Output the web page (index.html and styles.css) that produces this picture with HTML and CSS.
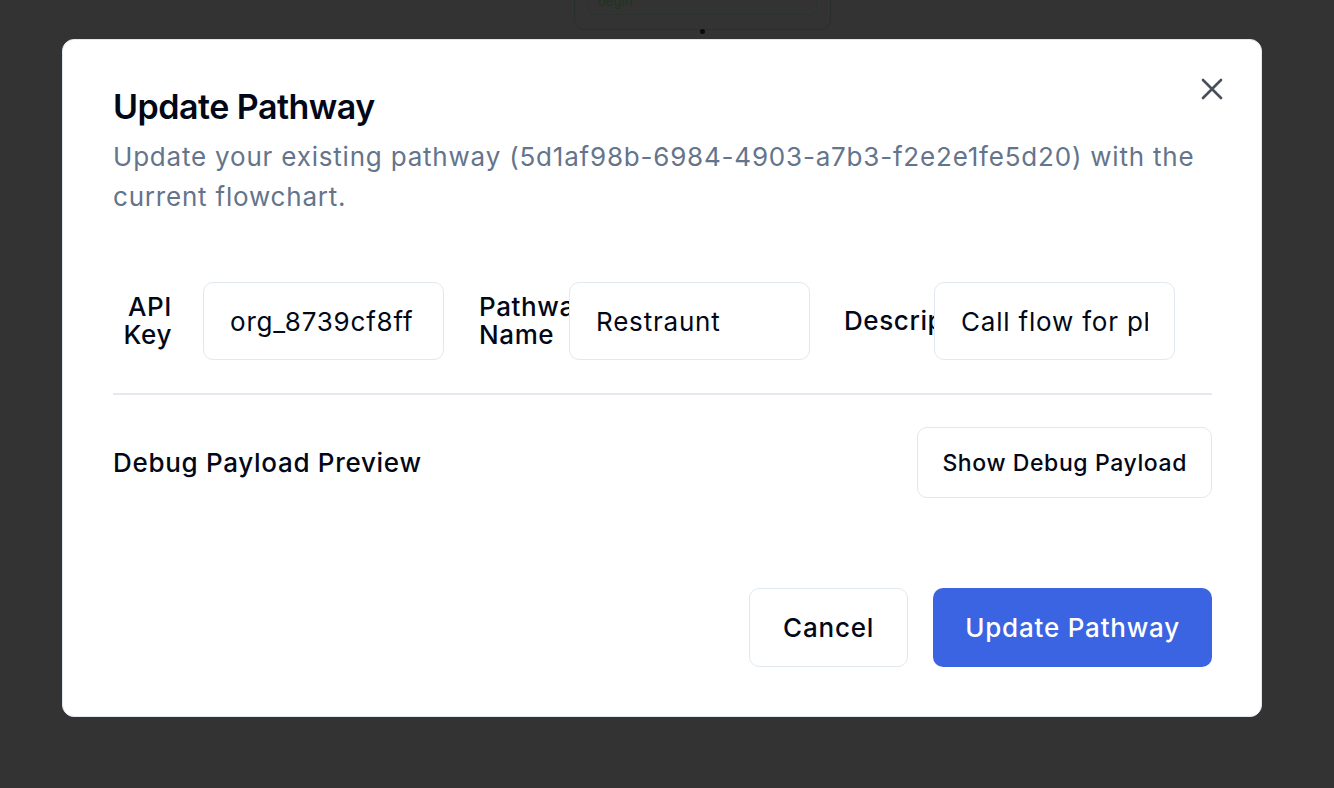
FILE: index.html
```html
<!DOCTYPE html>
<html lang="en">
<head>
<meta charset="utf-8">
<title>Update Pathway</title>
<link rel="stylesheet" href="styles.css">
</head>
<body>
<div class="canvas">
  <div class="node">
    <div class="node-inner"><span class="node-text">begin</span></div>
  </div>
  <div class="handle"></div>
</div>

<div class="dialog" role="dialog">
  <button class="close" aria-label="Close">
    <svg width="36" height="36" viewBox="0 0 24 24" fill="none" stroke="currentColor" stroke-width="1.75" stroke-linecap="round" stroke-linejoin="round"><path d="M18 6 6 18"/><path d="m6 6 12 12"/></svg>
  </button>
  <div class="header">
    <h2 class="title">Update Pathway</h2>
    <p class="desc">Update your existing pathway (5d1af98b-6984-4903-a7b3-f2e2e1fe5d20) with the current flowchart.</p>
  </div>

  <div class="fields">
    <div class="field">
      <label class="label">API Key</label>
      <input class="input" value="org_8739cf8ff">
    </div>
    <div class="field">
      <label class="label">Pathway Name</label>
      <input class="input" value="Restraunt">
    </div>
    <div class="field">
      <label class="label">Description</label>
      <input class="input" value="Call flow for phone orders">
    </div>
  </div>

  <div class="divider"></div>

  <div class="debug-row">
    <span class="debug-title">Debug Payload Preview</span>
    <button class="btn btn-outline btn-debug">Show Debug Payload</button>
  </div>

  <div class="footer">
    <button class="btn btn-outline btn-lg">Cancel</button>
    <button class="btn btn-primary btn-lg">Update Pathway</button>
  </div>
</div>
</body>
</html>
```

FILE: styles.css
```css
* { box-sizing: border-box; }

html, body {
  margin: 0;
  padding: 0;
}

body {
  width: 1334px;
  height: 788px;
  background: #333333;
  font-family: Inter, "Noto Sans", "Liberation Sans", sans-serif;
  overflow: hidden;
  position: relative;
  padding: 39px 0 0 62px;
}

.canvas {
  position: absolute;
  inset: 0;
  pointer-events: none;
}

.node {
  position: absolute;
  left: 574px;
  top: -40px;
  width: 257px;
  height: 70px;
  border: 1px solid #28302a;
  border-radius: 10px;
  padding: 10px 13px 14px 13px;
}

.node-inner {
  height: 100%;
  border: 1px solid #2c322d;
  border-radius: 6px;
  padding: 16px 0 0 9px;
}

.node-text {
  display: block;
  font-size: 13px;
  line-height: 14px;
  margin-top: 6px;
  color: #1f3520;
}

.handle {
  position: absolute;
  left: 700px;
  top: 29px;
  width: 5px;
  height: 5px;
  border-radius: 50%;
  background: #0a0a0a;
}

.dialog {
  position: relative;
  width: 1200px;
  height: 678px;
  background: #ffffff;
  border: 1px solid #e2e8f0;
  border-radius: 12px;
  padding: 47px 49px 49px 50px;
}

.close {
  position: absolute;
  top: 31px;
  right: 31px;
  width: 36px;
  height: 36px;
  padding: 0;
  border: 0;
  background: transparent;
  color: #4a4f5c;
  display: flex;
}

.header {
  display: flex;
  flex-direction: column;
}

.title {
  margin: 0;
  font-size: 34px;
  line-height: 40px;
  font-weight: 600;
  color: #020817;
  letter-spacing: -0.5px;
}

.desc {
  margin: 10px 0 0 0;
  font-size: 26px;
  line-height: 40px;
  letter-spacing: 0.8px;
  color: #64748b;
}

.fields {
  margin-top: 65px;
  display: grid;
  grid-template-columns: 366px 365px 1fr;
}

.field {
  display: flex;
  align-items: center;
}

.label {
  flex: 0 0 59px;
  width: 59px;
  text-align: right;
  font-size: 26px;
  line-height: 28px;
  letter-spacing: 0.6px;
  font-weight: 500;
  color: #020817;
  margin-right: 31px;
}

.input {
  position: relative;
  width: 241px;
  height: 78px;
  border: 1.5px solid #e2e8f0;
  border-radius: 10px;
  background: #ffffff;
  padding: 0 26px;
  font-family: inherit;
  font-size: 26px;
  letter-spacing: 0.8px;
  color: #020817;
  outline: none;
}

.divider {
  margin-top: 33px;
  height: 2px;
  background: #e5e9ef;
}

.debug-row {
  margin-top: 32px;
  display: flex;
  align-items: center;
  justify-content: space-between;
}

.debug-title {
  font-size: 26px;
  font-weight: 500;
  letter-spacing: 0.7px;
  color: #020817;
}

.btn {
  font-family: inherit;
  font-weight: 500;
  border-radius: 10px;
  cursor: pointer;
}

.btn-outline {
  background: #ffffff;
  border: 1.5px solid #e2e8f0;
  color: #020817;
}

.btn-debug {
  height: 71px;
  padding: 0 24px;
  font-size: 23px;
  letter-spacing: 0.6px;
}

.footer {
  margin-top: 90px;
  display: flex;
  justify-content: flex-end;
  gap: 25px;
}

.btn-lg {
  height: 79px;
  font-size: 26px;
  letter-spacing: 0.8px;
  padding: 0 32px;
}

.btn-lg.btn-outline {
  padding: 0 33px;
}

.btn-primary {
  background: #3a64e2;
  border: 0;
  color: #ffffff;
}
```
